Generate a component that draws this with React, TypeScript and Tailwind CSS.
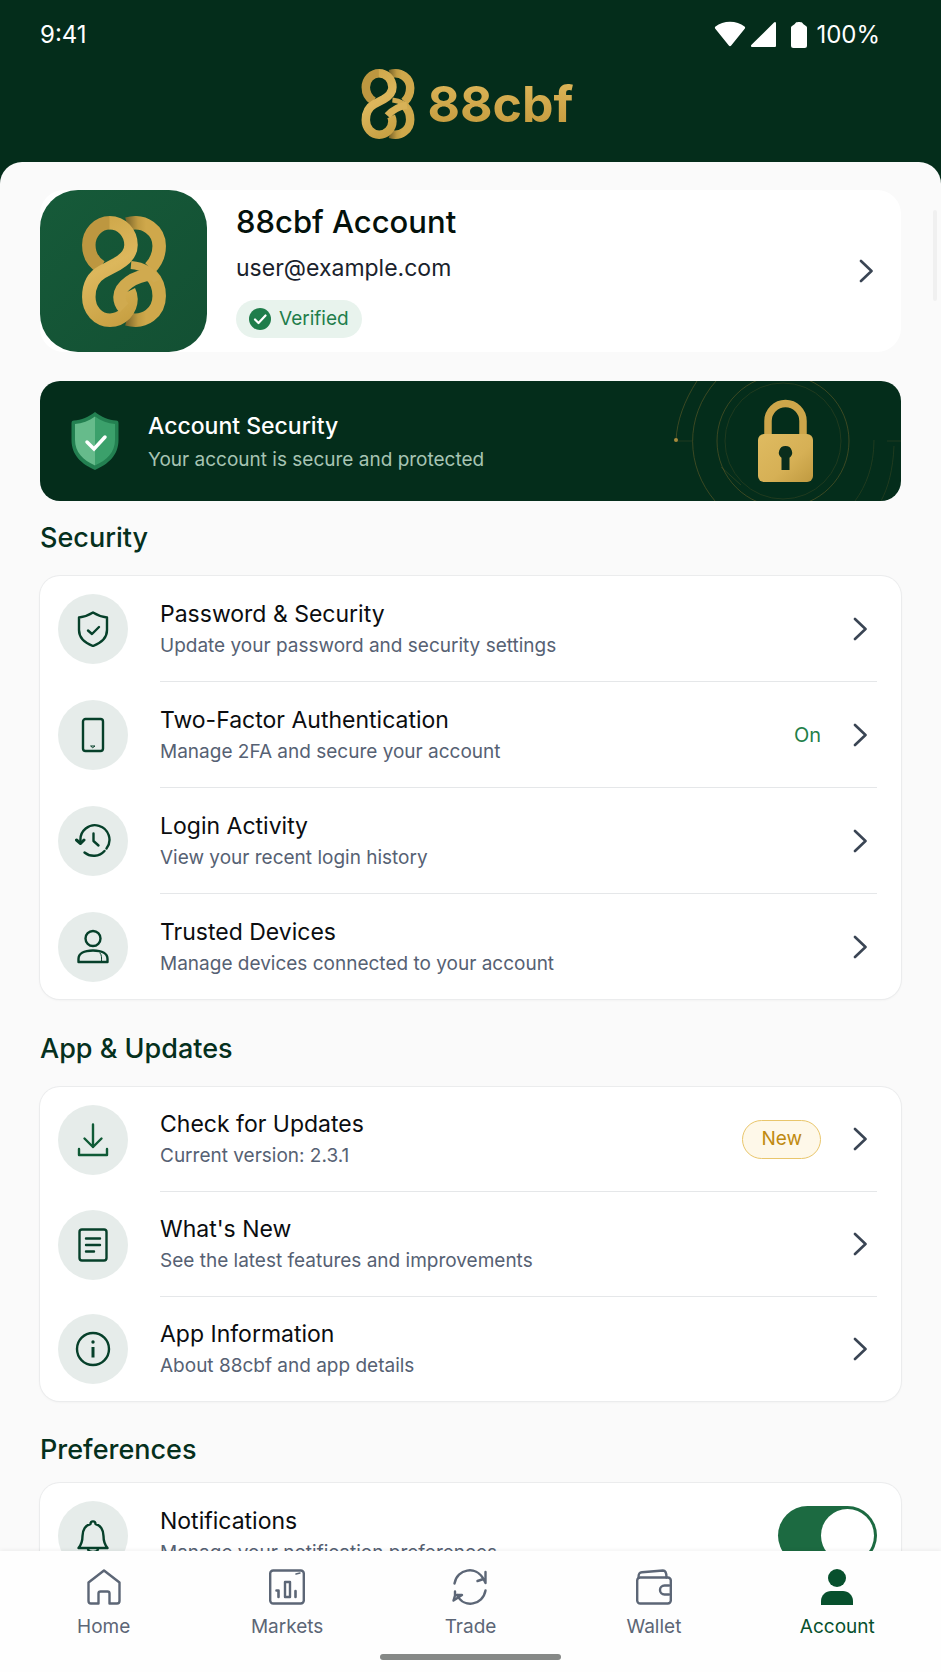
import React, { useId, useState } from 'react';
import clsx from 'clsx';

type IconProps = { className?: string };

// Two interlocked figure eights. `looped` closes the inner hook of the right-hand one.
function LogoMark({ className, looped = false }: IconProps & { looped?: boolean }) {
    const id = useId();
    const front = `${id}-front`;
    const back = `${id}-back`;

    return (
        <svg viewBox="0 0 84 111" className={className} fill="none" strokeWidth="13.500" aria-hidden="true">
            <defs>
                <linearGradient id={front} gradientUnits="userSpaceOnUse" x1="0" y1="0" x2="60" y2="111">
                    <stop offset="0" stopColor="#cba345" />
                    <stop offset="0.45" stopColor="#dcb75c" />
                    <stop offset="1" stopColor="#c39b3d" />
                </linearGradient>
                <linearGradient id={back} gradientUnits="userSpaceOnUse" x1="44" y1="0" x2="64" y2="0">
                    <stop offset="0" stopColor="#7a652a" />
                    <stop offset="0.6" stopColor="#c09b42" />
                    <stop offset="1" stopColor="#cfa84b" />
                </linearGradient>
            </defs>
            {/* right-hand eight, behind */}
            <path d="M45 8C63 3 77.200 15 77.200 30C77.200 40 74 46 68 52" stroke={`url(#${back})`} />
            <path d="M69 59C75 65 77.200 71 77.200 80C77.200 96 63 108 45 103" stroke={`url(#${back})`} />
            {/* left-hand eight */}
            <path d="M28 6.800C16 6.800 6.800 17 6.800 29C6.800 39 11 46 19 51" stroke="#bd9740" />
            <path
                d="M27.500 6.800C40 6.800 49 17 49 29C49 38 43 43.500 35 48L20 56C11 61 6.800 70 6.800 81C6.800 94 16 104.200 28 104.200C40 104.200 49 94 49 83C49 79 48 77 47 75"
                stroke={`url(#${front})`}
            />
            <path d="M49 49C60 50 70 55 75 65" stroke="#d0aa50" strokeWidth="8" />
            {looped ? (
                <path d="M70 58C52 60 37.500 70 37.500 81C37.500 86 39 89 42 92" stroke="#d0aa4f" strokeWidth="12.500" />
            ) : (
                <path d="M72 57.500C60 59 49 65 41 74" stroke="#d8b257" strokeWidth="11.500" />
            )}
        </svg>
    );
}

function StrokeIcon({ className, children, width = 2.4 }: IconProps & { children: React.ReactNode; width?: number }) {
    return (
        <svg
            viewBox="0 0 36 36"
            className={clsx('size-9 shrink-0', className)}
            fill="none"
            stroke="currentColor"
            strokeWidth={width}
            strokeLinecap="round"
            strokeLinejoin="round"
            aria-hidden="true"
        >
            {children}
        </svg>
    );
}

const ShieldIcon = () => (
    <StrokeIcon>
        <path d="M18 1.500C14 4 9 6 4 6.500V19c0 8 6 13 14 16 8-3 14-8 14-16V6.500C27 6 22 4 18 1.500Z" />
        <path d="m13 19.500 4 3.500 7-7" />
    </StrokeIcon>
);

const PhoneIcon = () => (
    <StrokeIcon>
        <rect x="8" y="2" width="20" height="32" rx="2.500" />
        <path d="M16 29h4l-2 1.500Z" strokeWidth="1" />
    </StrokeIcon>
);

const HistoryIcon = () => (
    <StrokeIcon>
        <path d="M5.500 18A14.500 14.500 0 1 1 31.500 25.500" />
        <path d="M29.500 28A14.500 14.500 0 0 1 9.500 29.500" />
        <path d="m1.500 17 4 3.500 3.500-3.500" strokeWidth="3" />
        <path d="M18.500 10.500V18l5 4.500" />
    </StrokeIcon>
);

const UserIcon = () => (
    <StrokeIcon>
        <circle cx="18" cy="9.500" r="7.500" />
        <path d="M3.500 33v-3c0-5 5-8.500 14.500-8.500S32.500 25 32.500 30v3Z" />
        <path d="M25 24c2 2 1.500 5 1.500 8.500" strokeWidth="1" />
    </StrokeIcon>
);

const DownloadIcon = () => (
    <StrokeIcon className="text-[#0f5a36]">
        <path d="M18 2.500V25M9.500 16.500 18 25l8.500-8.500" />
        <path d="M4 27v6h28v-6" />
    </StrokeIcon>
);

const NotesIcon = () => (
    <StrokeIcon>
        <rect x="4.500" y="2.500" width="27" height="31" rx="2.500" />
        <path d="M11 11.500h14M11 18h14M11 24.500h8" />
    </StrokeIcon>
);

const InfoIcon = () => (
    <StrokeIcon>
        <circle cx="18" cy="18" r="16" />
        <path d="M18 16v10.500" strokeWidth="3" strokeLinecap="butt" />
        <circle cx="18" cy="11" r="1.700" fill="currentColor" stroke="none" />
    </StrokeIcon>
);

const BellIcon = () => (
    <StrokeIcon>
        <path d="M3.500 30c3-3.500 4-6 4-12 0-6 3-11 8-12 0-3.500 5-3.500 5 0 5 1 8 6 8 12 0 6 1 8.500 4 12Z" />
        <path d="M13 30.500c0 4.500 10 4.500 10 0" />
    </StrokeIcon>
);

const HomeIcon = () => (
    <StrokeIcon>
        <path d="M2.500 13.500 18 1.500l15.500 12V32a2.500 2.500 0 0 1-2.500 2.500h-7.500v-10a2 2 0 0 0-2-2h-7a2 2 0 0 0-2 2v10H5A2.500 2.500 0 0 1 2.500 32Z" />
    </StrokeIcon>
);

const MarketsIcon = () => (
    <StrokeIcon>
        <rect x="1.200" y="1.500" width="33.600" height="33" rx="3" />
        <path d="M27 5l4-1" strokeWidth="1.500" />
        <path d="M7.500 21.500h2V28M26.500 22v6" strokeWidth="2.600" />
        <rect x="16" y="13" width="5" height="15" />
    </StrokeIcon>
);

const TradeIcon = () => (
    <StrokeIcon>
        <path d="M2.500 14.500C5 0 24-4 31.500 10" />
        <path d="M33.500 3v11l-2-4-6 2" />
        <path d="M33.500 21.500C31 36 12 40 5 26" />
        <path d="M3 22.500v4l-1.500 5 8.500-5.500-5 0" />
    </StrokeIcon>
);

const WalletIcon = () => (
    <StrokeIcon>
        <rect x="1.200" y="8.500" width="33.600" height="26" rx="3" />
        <path d="M2.500 8.500C2.500 5 3 3.500 6 3.200L27 1.500c2.500 0 3.500 2 3.500 7" />
        <path d="M33 16.500h-4.500a4.500 4.500 0 0 0 0 9H33" />
    </StrokeIcon>
);

const AccountIcon = () => (
    <svg viewBox="0 0 36 36" className="size-9" fill="currentColor" aria-hidden="true">
        <circle cx="18" cy="9" r="9" />
        <path d="M2 36v-4c0-6 5-10 10-10h12c5 0 10 4 10 10v4Z" />
    </svg>
);

function Chevron() {
    return (
        <svg
            viewBox="0 0 14 24"
            className="h-6 w-[14px] shrink-0 text-[#3a4554]"
            fill="none"
            stroke="currentColor"
            strokeWidth="2.600"
            strokeLinecap="round"
            strokeLinejoin="round"
            aria-hidden="true"
        >
            <path d="m2 2 10.500 10L2 22" />
        </svg>
    );
}

function StatusBar() {
    return (
        <div className="flex h-[70px] items-center justify-between pr-[61px] pl-10 text-2xl text-white">
            <span>9:41</span>
            <div className="flex items-center">
                <svg viewBox="0 0 94 28" className="h-7 w-[94px]" fill="currentColor" aria-hidden="true">
                    <path d="M1.500 5.500C9 -1 23 -1 30.500 5.500c.8.700.8 1.500.2 2.300L17.200 24.500c-.8 1-1.600 1-2.400 0L1.300 7.800c-.6-.8-.6-1.600.2-2.300Z" />
                    <path d="M62 2.500v22.500a1 1 0 0 1-1 1H38.500c-1.500 0-2-1.200-1-2.200L60 1.500c1-1 2-.5 2 1Z" />
                    <path d="M82 1.500c1-.8 5-.8 6 0l1.500 1.800L92 5c.8.600 1 1 1 2v17.500a2.500 2.500 0 0 1-2.500 2.500h-11a2.500 2.500 0 0 1-2.500-2.500V7c0-1 .2-1.400 1-2l2.500-1.700Z" />
                </svg>
                <span className="ml-2">100%</span>
            </div>
        </div>
    );
}

function ProfileCard() {
    return (
        <button className="flex w-full items-center rounded-3xl bg-white pr-7 text-left">
            <span className="flex h-[162px] w-[167px] shrink-0 items-center justify-center rounded-[38px] bg-linear-to-br from-[#165a39] to-[#135033]">
                <LogoMark looped className="h-[111px] w-[84px]" />
            </span>
            <span className="ml-[29px] flex min-w-0 flex-1 flex-col items-start">
                <span className="text-[31px] leading-9 font-medium text-[#04110b]">88cbf Account</span>
                <span className="mt-2 text-[23px] leading-10 text-[#1a222c]">user@example.com</span>
                <span className="mt-3 flex h-[38px] items-center gap-[7px] rounded-full bg-[#e8f3ed] pr-[13px] pl-3 text-[19px] text-[#1f7d4b]">
                    <svg viewBox="0 0 24 24" className="size-6" aria-hidden="true">
                        <circle cx="12" cy="12" r="11" fill="#1f7d4b" />
                        <path
                            d="m7 12.500 3.500 3.500 7-7.500"
                            fill="none"
                            stroke="#fff"
                            strokeWidth="2.200"
                            strokeLinecap="round"
                            strokeLinejoin="round"
                        />
                    </svg>
                    Verified
                </span>
            </span>
            <Chevron />
        </button>
    );
}

function SecurityBanner() {
    return (
        <div className="relative mt-[29px] flex h-[120px] items-center overflow-hidden rounded-[20px] bg-[#042d1b] pl-[31px]">
            <svg viewBox="0 0 48 58" className="h-[58px] w-12 shrink-0" aria-hidden="true">
                <path
                    d="M24 0C18 5 10 8 3 8.500c-2 .2-2.500 1-2.500 3V28c0 15 10 24 23.500 30 13.500-6 23.500-15 23.500-30V11.500c0-2-.5-2.800-2.500-3C38 8 30 5 24 0Z"
                    fill="#238051"
                />
                <path d="M24 4.500C18 9 11 11.500 4 12v16c0 12 8 20 20 25.500Z" fill="#66bb8b" />
                <path d="M24 4.500c6 4.500 13 7 20 7.500v16c0 12-8 20-20 25.500Z" fill="#3ba06b" />
                <path d="m16 30 7 7 11-12" fill="none" stroke="#fff" strokeWidth="3.500" strokeLinecap="round" />
            </svg>
            <div className="relative z-10 ml-[29px] pt-[3px]">
                <p className="text-[23px] leading-[34px] font-medium text-white">Account Security</p>
                <p className="text-[19px] leading-[34px] text-[#a7c4b3]">Your account is secure and protected</p>
            </div>
            {/* padlock with the faint orbit lines around it */}
            <svg viewBox="0 0 242 120" className="absolute inset-y-0 right-0 h-full w-[242px]" fill="none" aria-hidden="true">
                <defs>
                    <linearGradient id="lock-gold" x1="0" y1="0" x2="1" y2="1">
                        <stop offset="0" stopColor="#dfbb61" />
                        <stop offset="0.6" stopColor="#d6b055" />
                        <stop offset="1" stopColor="#c09a40" />
                    </linearGradient>
                </defs>
                <g stroke="#8f7430" strokeOpacity="0.4">
                    <circle cx="124" cy="60" r="66" />
                    <circle cx="124" cy="60" r="58" strokeOpacity="0.2" />
                    <path d="M57 0C25 36 27 86 56 120M38 0C25 20 18 40 17 59" />
                    <path d="M17 60h16M215 59c0 26-8 46-19 61M228 60h14M235 65c-1 24-6 42-13 55" strokeOpacity="0.2" />
                    <path d="m62 86 20 18" strokeOpacity="0.25" />
                </g>
                <circle cx="17" cy="59" r="2" fill="#a88a3c" />
                <path d="M109 55V40a17.500 17.500 0 0 1 35 0v15" stroke="#cda64a" strokeWidth="7.500" />
                <rect x="99" y="53" width="55" height="48" rx="6" fill="url(#lock-gold)" />
                <path d="M126.500 65a6.500 6.500 0 0 1 4 11.700V89h-8V76.700A6.500 6.500 0 0 1 126.500 65Z" fill="#0a2d1c" />
            </svg>
        </div>
    );
}

interface RowProps {
    icon: React.ReactNode;
    title: string;
    subtitle: string;
    extra?: React.ReactNode;
    dense?: boolean;
}

function RowIcon({ children }: { children: React.ReactNode }) {
    return (
        <span className="flex size-[70px] shrink-0 items-center justify-center rounded-full bg-[#e6ecea] text-[#06402a]">
            {children}
        </span>
    );
}

function RowText({ title, subtitle }: { title: string; subtitle: string }) {
    return (
        <span className="flex min-w-0 flex-1 flex-col pt-0.5">
            <span className="text-[23px] leading-8 text-[#0b0d10]">{title}</span>
            <span className="text-[19px] leading-8 text-[#566173]">{subtitle}</span>
        </span>
    );
}

function Row({ icon, title, subtitle, extra, dense = false }: RowProps) {
    return (
        <li className="group">
            <button className="flex w-full items-center pl-[18px] text-left">
                <RowIcon>{icon}</RowIcon>
                <span className="mr-6 ml-8 flex flex-1 items-center border-[#e5e7e9] group-not-last:border-b">
                    <span className={clsx('flex flex-1 items-center pr-[10px]', dense ? 'h-[104px]' : 'h-[105px]')}>
                        <RowText title={title} subtitle={subtitle} />
                        {extra}
                        <Chevron />
                    </span>
                </span>
            </button>
        </li>
    );
}

function Section({ title, className, children }: { title: string; className: string; children: React.ReactNode }) {
    return (
        <section className={clsx('flex flex-col', className)}>
            <h2 className="text-[27px] leading-9 font-medium text-[#05301d]">{title}</h2>
            <ul className="rounded-[20px] bg-white shadow-[0_1px_3px_rgba(0,0,0,0.06)] ring-1 ring-[#ebeced]">{children}</ul>
        </section>
    );
}

const securityRows: RowProps[] = [
    { icon: <ShieldIcon />, title: 'Password & Security', subtitle: 'Update your password and security settings' },
    {
        icon: <PhoneIcon />,
        title: 'Two-Factor Authentication',
        subtitle: 'Manage 2FA and secure your account',
        extra: <span className="mr-8 text-xl text-[#1f8049]">On</span>,
    },
    { icon: <HistoryIcon />, title: 'Login Activity', subtitle: 'View your recent login history' },
    { icon: <UserIcon />, title: 'Trusted Devices', subtitle: 'Manage devices connected to your account' },
];

const updateRows: RowProps[] = [
    {
        icon: <DownloadIcon />,
        title: 'Check for Updates',
        subtitle: 'Current version: 2.3.1',
        extra: (
            <span className="mr-8 flex h-[39px] items-center rounded-full border border-[#e9c66c] bg-[#fef8e9] px-[18px] text-[19px] text-[#c08a10]">
                New
            </span>
        ),
    },
    { icon: <NotesIcon />, title: "What's New", subtitle: 'See the latest features and improvements' },
    { icon: <InfoIcon />, title: 'App Information', subtitle: 'About 88cbf and app details' },
];

const tabs = [
    { label: 'Home', icon: <HomeIcon /> },
    { label: 'Markets', icon: <MarketsIcon /> },
    { label: 'Trade', icon: <TradeIcon /> },
    { label: 'Wallet', icon: <WalletIcon /> },
    { label: 'Account', icon: <AccountIcon /> },
];

function BottomNav() {
    return (
        <nav className="relative z-10 bg-[#fefefe] px-3 pt-[18px] pb-3 shadow-[0_-1px_4px_rgba(0,0,0,0.06)]">
            <ul className="grid grid-cols-5">
                {tabs.map((tab) => {
                    const active = tab.label === 'Account';
                    return (
                        <li key={tab.label}>
                            <a
                                href={`#${tab.label.toLowerCase()}`}
                                aria-current={active ? 'page' : undefined}
                                className={clsx(
                                    'flex flex-col items-center gap-1.5 text-[19px] leading-8',
                                    active ? 'text-[#07502d]' : 'text-[#5c6676]',
                                )}
                            >
                                {tab.icon}
                                {tab.label}
                            </a>
                        </li>
                    );
                })}
            </ul>
            <div className="mx-auto mt-[11px] h-[6px] w-[181px] rounded-full bg-[#868987]" />
        </nav>
    );
}

export default function App() {
    const [notifications, setNotifications] = useState(true);

    return (
        <div className="flex h-screen flex-col bg-[#042d1b] font-['Inter','Liberation_Sans',sans-serif]">
            <header className="h-[162px] shrink-0">
                <StatusBar />
                <div className="flex h-[68px] items-center justify-center gap-3 pr-2">
                    <LogoMark className="h-[70px] w-14" />
                    <h1 className="bg-linear-to-b from-[#e0b95c] to-[#c2983a] bg-clip-text text-[50px] leading-[60px] font-bold text-transparent">
                        88cbf
                    </h1>
                </div>
            </header>

            <div className="relative min-h-0 flex-1 overflow-hidden rounded-t-[22px] bg-[#fafafa]">
                <main className="h-full overflow-y-auto px-10 pt-7 pb-8 [scrollbar-width:none]">
                    <ProfileCard />
                    <SecurityBanner />

                    <Section title="Security" className="mt-[19px] gap-5">
                        {securityRows.map((row) => (
                            <Row key={row.title} {...row} />
                        ))}
                    </Section>

                    <Section title="App & Updates" className="mt-8 gap-5">
                        {updateRows.map((row) => (
                            <Row key={row.title} dense {...row} />
                        ))}
                    </Section>

                    <Section title="Preferences" className="mt-[31px] gap-[15px]">
                        <li>
                            <label className="flex h-[105px] cursor-pointer items-center gap-8 pr-6 pl-[18px]">
                                <RowIcon>
                                    <BellIcon />
                                </RowIcon>
                                <RowText title="Notifications" subtitle="Manage your notification preferences" />
                                <input
                                    type="checkbox"
                                    role="switch"
                                    checked={notifications}
                                    onChange={(e) => setNotifications(e.target.checked)}
                                    className="flex h-[59px] w-[99px] shrink-0 cursor-pointer appearance-none items-center rounded-full bg-gray-300 p-[3px] before:size-[53px] before:rounded-full before:bg-white checked:justify-end checked:bg-[#1c6a41]"
                                />
                            </label>
                        </li>
                    </Section>
                </main>
                {/* scroll position thumb */}
                <div className="absolute top-12 right-1 h-[91px] w-1 rounded-full bg-[#f0f0f0]" />
            </div>

            <BottomNav />
        </div>
    );
}
